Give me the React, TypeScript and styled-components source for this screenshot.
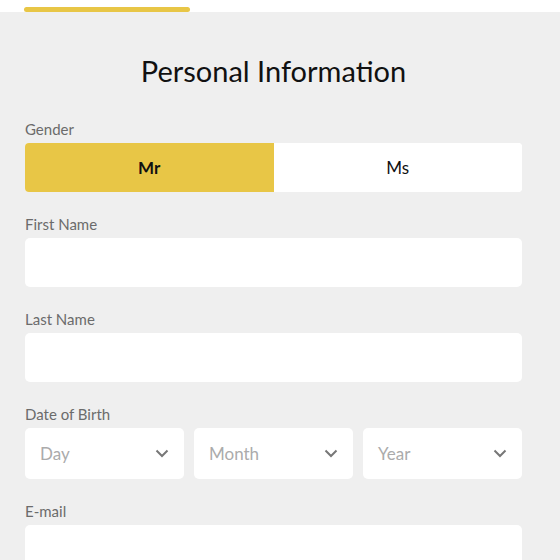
import React, { useState } from "react";
import styled, { createGlobalStyle } from "styled-components";

const Global = createGlobalStyle`
  html, body { margin: 0; padding: 0; background: #efefef; }
  body { font-family: "Lato", "Noto Sans", sans-serif; }
  * { box-sizing: border-box; }
`;

const TopBar = styled.div`
  height: 12px;
  background: #ffffff;
  padding: 7px 0 0 24px;
`;

const Progress = styled.div<{ $w: number }>`
  width: ${(p) => p.$w}px;
  height: 5px;
  border-radius: 3px;
  background: #e8c646;
`;

const Page = styled.div`
  width: 497px;
  margin-left: 25px;
  padding-top: 39px;
`;

const Title = styled.h1`
  margin: 0 0 27px;
  text-align: center;
  font-size: 29px;
  font-weight: 400;
  color: #111;
  line-height: 40px;
`;

const Group = styled.div`
  margin-bottom: 21px;
`;

const Label = styled.div`
  font-size: 15px;
  line-height: 22px;
  color: #6b6b6b;
  margin-bottom: 3px;
`;

const Toggle = styled.div`
  display: flex;
  height: 49px;
  border-radius: 4px;
  overflow: hidden;
  background: #fff;
`;

const ToggleBtn = styled.button<{ $active: boolean }>`
  flex: 1;
  border: none;
  margin: 0;
  font-family: inherit;
  font-size: 17px;
  color: #111;
  font-weight: ${(p) => (p.$active ? 700 : 400)};
  background: ${(p) => (p.$active ? "#e8c646" : "#ffffff")};
  cursor: pointer;
`;

const Input = styled.input`
  display: block;
  width: 100%;
  height: 49px;
  border: none;
  border-radius: 5px;
  background: #fff;
  padding: 0 15px;
  font-family: inherit;
  font-size: 16px;
  outline: none;
`;

const DateRow = styled.div`
  display: grid;
  grid-template-columns: 1fr 1fr 1fr;
  gap: 10px;
`;

const Select = styled.div`
  height: 51px;
  border-radius: 5px;
  background: #fff;
  display: flex;
  align-items: center;
  justify-content: space-between;
  padding: 0 15px;
  font-size: 17px;
  color: #ababab;
`;

const Chevron = () => (
  <svg width="14" height="9" viewBox="0 0 14 9">
    <path d="M1.5 1.5 L7 7 L12.5 1.5" fill="none" stroke="#777" strokeWidth="2" />
  </svg>
);

export default function App() {
  const [g, setG] = useState("Mr");
  return (
    <>
      <Global />
      <TopBar>
        <Progress $w={166} />
      </TopBar>
      <Page>
        <Title>Personal Information</Title>
        <Group>
          <Label>Gender</Label>
          <Toggle>
            <ToggleBtn $active={g === "Mr"} onClick={() => setG("Mr")}>Mr</ToggleBtn>
            <ToggleBtn $active={g === "Ms"} onClick={() => setG("Ms")}>Ms</ToggleBtn>
          </Toggle>
        </Group>
        <Group>
          <Label>First Name</Label>
          <Input />
        </Group>
        <Group>
          <Label>Last Name</Label>
          <Input />
        </Group>
        <Group>
          <Label>Date of Birth</Label>
          <DateRow>
            {["Day", "Month", "Year"].map((t) => (
              <Select key={t}>
                <span>{t}</span>
                <Chevron />
              </Select>
            ))}
          </DateRow>
        </Group>
        <Group>
          <Label>E-mail</Label>
          <Input />
        </Group>
      </Page>
    </>
  );
}
